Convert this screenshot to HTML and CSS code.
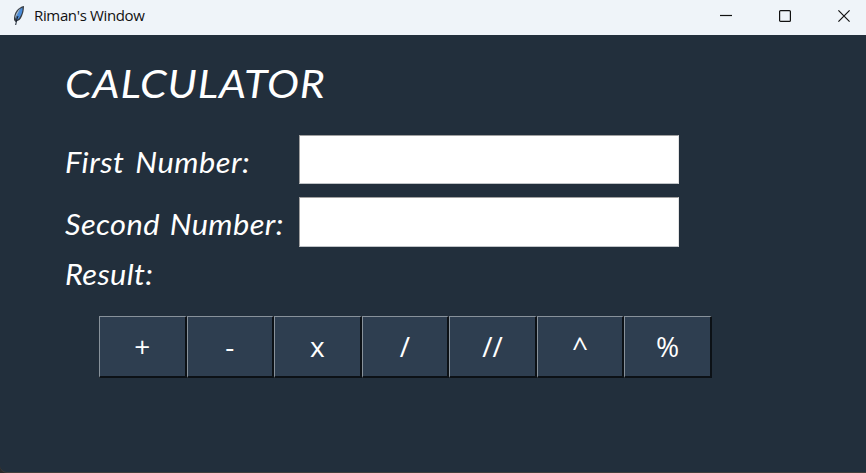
FILE: index.html
```html
<!DOCTYPE html>
<html lang="en">
<head>
<meta charset="utf-8">
<title>Riman's Window</title>
<link rel="stylesheet" href="styles.css">
</head>
<body>
<div class="window">
  <header class="titlebar">
    <svg class="feather" width="16" height="22" viewBox="0 0 16 22">
      <path d="M13 1C7 2 2.500 8 3 15L4.500 17L8.500 15C12 11 13 5 13 1Z" fill="#373c43"/>
      <path d="M11.500 2.500C7 5 5 10 5.500 15L8 13.500C10.500 10 12 6 11.500 2.500Z" fill="#4a8bd8"/>
      <path d="M9.500 3C6 6 4 10 4 14L6 10Z" fill="#a8bdd0"/>
      <path d="M7 11Q5.500 14 4.700 20" fill="none" stroke="#16202e" stroke-width="1"/>
    </svg>
    <span class="caption">Riman's Window</span>
    <div class="controls">
      <svg width="12" height="12" viewBox="0 0 12 12"><path d="M0 5.500H12"/></svg>
      <svg width="12" height="12" viewBox="0 0 12 12"><rect x=".6" y=".6" width="10.800" height="10.800" rx="1"/></svg>
      <svg width="12" height="12" viewBox="0 0 12 12"><path d="M.4.400L11.600 11.600M11.600.400L.4 11.600"/></svg>
    </div>
  </header>
  <main class="content">
    <h1>CALCULATOR</h1>
    <form class="fields">
      <label class="first" for="first">First Number:</label><input id="first" type="text">
      <label class="second" for="second">Second Number:</label><input id="second" type="text">
    </form>
    <p class="result">Result:</p>
    <div class="keys">
      <button>+</button><button>-</button><button>x</button><button>/</button><button>//</button><button>^</button><button>%</button>
    </div>
  </main>
</div>
</body>
</html>
```
FILE: styles.css
```css
* { box-sizing: border-box; }
body { margin: 0; background: #2b2b2b; }
.window {
  height: 473px;
  background: #222f3c;
  border-bottom: 1px solid #403e3c;
  border-bottom-left-radius: 7px;
  overflow: hidden;
}
.titlebar {
  height: 35px;
  padding: 0 16px 3px 11px;
  display: flex;
  align-items: center;
  background: #eff4f9;
}
.feather { margin-right: 7px; }
.caption { font: 15px/20px "Open Sans", sans-serif; color: #111; letter-spacing: -0.35px; margin-top: -2px; }
.controls { display: flex; gap: 47px; margin-left: auto; }
.controls svg { fill: none; stroke: #111; stroke-width: 1.200; }
.content {
  padding: 24px 0 0 65px;
  color: #fff;
  font-family: "Segoe Print", "Ink Free", Lato, sans-serif;
  font-style: italic;
}
h1, label, .result { transform: scaleX(1.1); transform-origin: left; }
h1 { margin: 0; font-size: 39px; line-height: 48px; font-weight: 400; letter-spacing: 0.700px; }
.fields {
  display: grid;
  grid-template-columns: 234px 380px;
  grid-template-rows: 49px 50px;
  row-gap: 13px;
  margin-top: 28px;
}
label, .result { font-size: 28px; line-height: 54px; white-space: nowrap; letter-spacing: 0.450px; word-spacing: 3px; }
.second { letter-spacing: 0.350px; word-spacing: 2px; }
input {
  border: 1px solid #a0a0a0;
  border-right-color: #e3e3e3;
  border-bottom-color: #c0c4c8;
  background: #fff;
  padding: 0 4px;
  font: 24px "Open Sans", sans-serif;
}
.result { margin: 8px 0 0; line-height: 38px; letter-spacing: 0.300px; }
.keys { display: flex; margin: 23px 0 0 34px; }
button {
  width: 87.570px;
  height: 62px;
  padding: 0 0 2px;
  border: 1px solid;
  border-width: 1px 2px 2px 1px;
  border-color: #88929b #0c1116 #0c1116 #88929b;
  background: #2e3e50;
  color: #fff;
  font: 500 28px/40px "Open Sans", sans-serif;
}
```
